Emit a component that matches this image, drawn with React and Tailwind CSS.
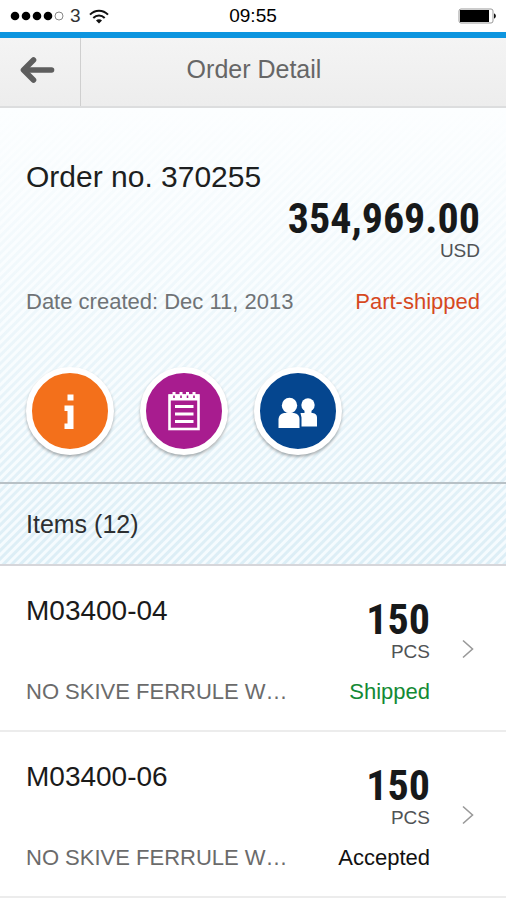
import React from "react";

const items = [
  { id: "M03400-04", description: "NO SKIVE FERRULE W…", qty: "150", unit: "PCS", status: "Shipped", color: "text-[#138a35]" },
  { id: "M03400-06", description: "NO SKIVE FERRULE W…", qty: "150", unit: "PCS", status: "Accepted", color: "text-[#111111]" },
];

function StatusBar() {
  return (
    <div className="grid grid-cols-3 items-center h-8 px-[10px] bg-white text-black">
      <div className="flex items-center gap-[6px]">
        <svg width="54" height="10" viewBox="0 0 54 10" aria-hidden="true">
          <circle cx="5" cy="5" r="4.3" />
          <circle cx="16" cy="5" r="4.3" />
          <circle cx="27" cy="5" r="4.3" />
          <circle cx="38" cy="5" r="4.3" />
          <circle cx="49" cy="5" r="4" fill="none" stroke="#888888" strokeWidth="1" />
        </svg>
        <span className="text-[19px] leading-6 text-[#333333]">3</span>
        <svg className="ml-[2px]" width="20" height="15" viewBox="0 0 20 15" fill="none" stroke="#111111" strokeWidth="2" aria-hidden="true">
          <path d="M1 5.6C6 .3 14 .3 19 5.6" />
          <path d="M4.3 9C7.5 5.7 12.5 5.7 15.7 9" />
          <path d="M10 14.4L7 11.4C8.7 9.8 11.3 9.8 13 11.4Z" fill="#111111" stroke="none" />
        </svg>
      </div>
      <span className="text-center text-[19px] leading-6">09:55</span>
      <svg className="justify-self-end" width="38" height="16" viewBox="0 0 38 16" aria-hidden="true">
        <rect x="1" y="1" width="34" height="14" rx="2" fill="#ffffff" stroke="#999999" />
        <rect x="2" y="2" width="29" height="12" fill="#000000" />
        <path d="M36 5.5C38.5 6 38.5 10 36 10.5Z" fill="#111111" />
      </svg>
    </div>
  );
}

function Header() {
  return (
    <header className="flex items-stretch h-[70px] border-b-2 border-[#dcddde] bg-linear-to-b from-[#f4f4f4] to-[#ededed]">
      <button type="button" aria-label="Back" className="flex w-[81px] items-center justify-center border-r border-[#cfcfcf] pr-[7px] pb-[5px]">
        <svg width="36" height="28" viewBox="0 0 36 28" fill="none" stroke="#5e5e5e" strokeWidth="5.6" strokeLinecap="round" strokeLinejoin="round">
          <path d="M14.5 4L4.5 14L14.5 24" />
          <path d="M6 14H32.5" />
        </svg>
      </button>
      <h1 className="flex-1 pr-[79px] pt-[15px] text-center text-[25px] leading-8 text-[#666666]">Order Detail</h1>
    </header>
  );
}

function BigNumber({ children }) {
  return (
    <span className="font-['Roboto_Condensed','Liberation_Sans',sans-serif] text-[42px] font-bold leading-10 text-[#17191a]">
      {children}
    </span>
  );
}

function RoundButton({ label, className, children }) {
  return (
    <button
      type="button"
      aria-label={label}
      className={`flex size-[88px] items-center justify-center rounded-full border-[6px] border-white shadow-[0_2px_3px_rgba(0,0,0,0.3)] ${className}`}
    >
      {children}
    </button>
  );
}

function Summary() {
  return (
    <section className="px-[26px] pt-[49px] pb-[27px]">
      <h2 className="text-[30px] leading-10 text-[#1d1f20]">Order no. 370255</h2>
      <div className="mt-[2px] flex flex-col items-end">
        <BigNumber>354,969.00</BigNumber>
        <span className="text-[19px] leading-6 text-[#505355]">USD</span>
      </div>
      <div className="mt-[25px] flex justify-between text-[22px] leading-7">
        <span className="text-[#6f7376]">Date created: Dec 11, 2013</span>
        <span className="text-[#d6491f]">Part-shipped</span>
      </div>
      <div className="mt-[51px] flex gap-[26px]">
        <RoundButton label="Order information" className="bg-[#f3701b]">
          <svg width="12" height="36" viewBox="0 0 12 36" fill="#ffffff">
            <path d="M3.5 1.5H9.5V7.5H3.5Z" />
            <path d="M0.5 12.5H9.5V36H0.5V30.5H3.5V18H0.5Z" />
          </svg>
        </RoundButton>
        <RoundButton label="Order notes" className="bg-[#a81c8f]">
          <svg width="32" height="40" viewBox="0 0 32 40" fill="none" stroke="#ffffff">
            <rect x="1.5" y="4.5" width="29" height="33.5" strokeWidth="2.6" />
            <path d="M1 6.5H31" strokeWidth="6" />
            <path d="M6 1V6M13 1V6M19.5 1V6M26 1V6" strokeWidth="3" />
            <path d="M6 4.5V7M13 4.5V7M19.5 4.5V7M26 4.5V7" stroke="#a81c8f" strokeWidth="1.6" />
            <path d="M7 15.5H25.5M7 23H25.5M7 30.5H25.5" strokeWidth="3" />
          </svg>
        </RoundButton>
        <RoundButton label="Contacts" className="bg-[#05468f]">
          <svg width="40" height="32" viewBox="0 0 40 32" fill="#ffffff" className="mt-[4px]">
            <circle cx="11.5" cy="8.5" r="7.7" />
            <circle cx="30" cy="8" r="6.7" />
            <path d="M0.5 31V22Q1 17 6 16H16Q21.5 17 21.5 22V31Z" />
            <path d="M23.5 29.5V20.5L22.5 16H34.5Q39 16.5 39 20.5V29.5Z" />
            <path d="M26.5 12H33.5V17H26.5Z" />
          </svg>
        </RoundButton>
      </div>
    </section>
  );
}

function ItemRow({ item }) {
  return (
    <li className="border-b-2 border-[#ececec]">
      <a href="#" className="flex items-center bg-white pl-[26px] pr-8 pt-[25px] pb-6">
        <div className="flex-1">
          <div className="flex h-[72px] justify-between">
            <span className="text-[28px] leading-10 text-[#1a1a1a]">{item.id}</span>
            <div className="flex flex-col items-end pt-[9px]">
              <BigNumber>{item.qty}</BigNumber>
              <span className="text-[19px] leading-6 text-[#505355]">{item.unit}</span>
            </div>
          </div>
          <div className="mt-[15px] flex justify-between text-[22px] leading-7">
            <span className="text-[#6b6b6b]">{item.description}</span>
            <span className={item.color}>{item.status}</span>
          </div>
        </div>
        <svg className="ml-8 shrink-0" width="12" height="20" viewBox="0 0 12 20" fill="none" stroke="#999999" strokeWidth="1.6" aria-hidden="true">
          <path d="M1 1.5L10.5 10L1 18.5" />
        </svg>
      </a>
    </li>
  );
}

export default function App() {
  return (
    <div className="min-h-screen bg-white font-['Liberation_Sans',Arial,sans-serif]">
      <StatusBar />
      <div className="h-[6px] bg-[#0d95df]" />
      <Header />
      <main>
        <div className="bg-[linear-gradient(to_bottom,rgba(252,254,255,1),rgba(250,254,255,0)),repeating-linear-gradient(135deg,#dceef6_0px,#dceef6_2px,#f5fbfe_3px,#f5fbfe_5px,#dceef6_6px)]">
          <Summary />
          <h2 className="border-t-2 border-b-2 border-t-[#b8c1c6] border-b-[#d6d6da] px-[26px] py-6 text-[25px] leading-8 text-[#2c2f31]">
            Items (12)
          </h2>
        </div>
        <ul>
          {items.map((item) => (
            <ItemRow key={item.id} item={item} />
          ))}
        </ul>
      </main>
    </div>
  );
}
